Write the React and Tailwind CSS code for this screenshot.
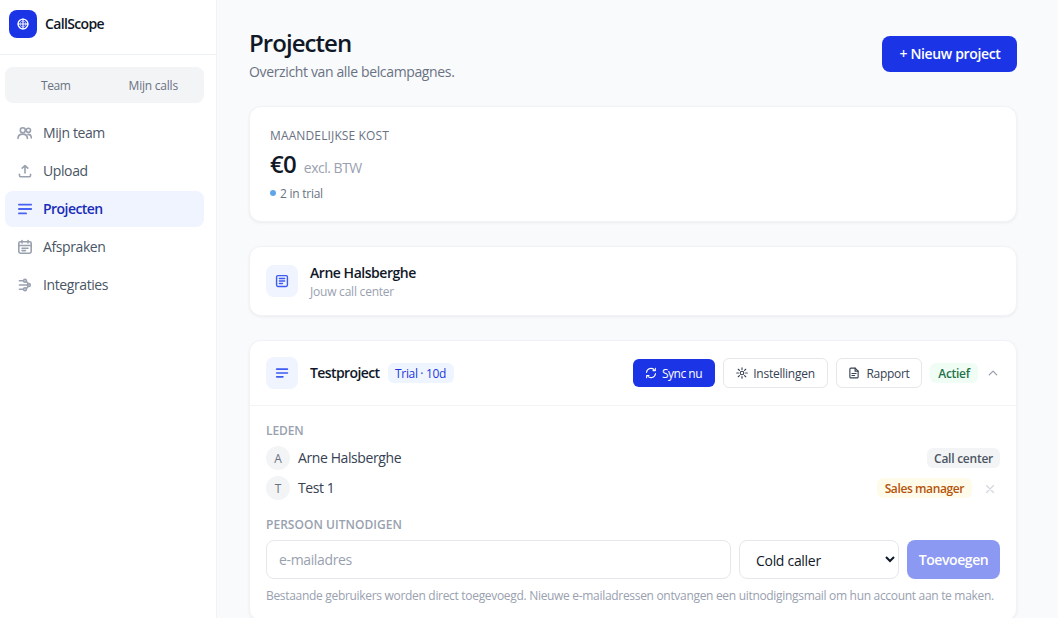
const NAV = [
    { label: 'Mijn team', icon: TeamIcon },
    { label: 'Upload', icon: UploadIcon },
    { label: 'Projecten', icon: LinesIcon, active: true },
    { label: 'Afspraken', icon: CalendarIcon },
    { label: 'Integraties', icon: FlowIcon },
];

const MEMBERS = [
    { name: 'Arne Halsberghe', initial: 'A', role: 'Call center', badge: 'bg-gray-100 px-[7px] text-[#4b5563] tracking-[-0.25px]' },
    { name: 'Test 1', initial: 'T', role: 'Sales manager', badge: 'bg-[#fffbeb] px-2 text-[#b45309] tracking-[-0.4px]', removable: true },
];

function Svg({ size = 16, width = 1.6, className = '', children }) {
    return (
        <svg
            width={size}
            height={size}
            viewBox="0 0 16 16"
            fill="none"
            stroke="currentColor"
            strokeWidth={width}
            strokeLinecap="round"
            strokeLinejoin="round"
            className={`shrink-0 ${className}`}
        >
            {children}
        </svg>
    );
}

function LogoIcon() {
    return (
        <Svg size={14}>
            <circle cx="8" cy="8" r="5.6" />
            <path d="M8 2.2v11.6M2.2 8h11.6" strokeWidth="1.3" />
            <circle cx="8" cy="8" r="3.4" strokeWidth="0.6" />
        </Svg>
    );
}

function TeamIcon() {
    return (
        <Svg>
            <circle cx="5.8" cy="5.3" r="2.5" />
            <path d="M1 13.4c0-2.7 2-4.3 4.7-4.3s4.7 1.6 4.7 4.3" />
            <circle cx="11.4" cy="5.3" r="2.1" />
            <path d="M11 9.4c2 0 3.3 1.3 3.3 3.6" />
        </Svg>
    );
}

function UploadIcon() {
    return (
        <Svg>
            <path d="M8 10V2.5M5.2 5.2L8 2.5l2.8 2.7M2.5 11.2v1.6c0 .6.4 1 1 1h9c.6 0 1-.4 1-1v-1.6" />
        </Svg>
    );
}

function LinesIcon({ size = 16 }) {
    return (
        <Svg size={size} width={1.8}>
            <path d="M1.9 3.6h12.3M1.9 8h12.3M1.9 12.4h7.2" />
        </Svg>
    );
}

function CalendarIcon() {
    return (
        <Svg>
            <rect x="1.8" y="2.7" width="12.4" height="11.5" rx="1.6" />
            <path d="M1.8 6.5h12.4M5 1.5v2.4M11 1.5v2.4M5 9.2h6M5 11.6h3.5" />
        </Svg>
    );
}

function FlowIcon() {
    return (
        <Svg>
            <path d="M2.4 3.8h4M2.4 8h7.6M2.4 12.2h4M9.4 4.4l2 2.3M9.4 11.6l2-2.3" />
            <circle cx="8" cy="3.8" r="1.4" />
            <circle cx="11.9" cy="8" r="1.4" />
            <circle cx="8" cy="12.2" r="1.4" />
        </Svg>
    );
}

function DocBoxIcon() {
    return (
        <Svg size={14} width={1.6}>
            <rect x="1.8" y="1.8" width="12.4" height="12.4" rx="1.5" />
            <path d="M5 5.2h6M5 8h6M5 10.8h3.5" />
        </Svg>
    );
}

function SyncIcon() {
    return (
        <Svg size={12} width={1.4}>
            <path d="M2 7.2A6 6 0 0 1 13 4.6M14 8.8A6 6 0 0 1 3 11.4" />
            <path d="M13.8 1.6v3.2h-3.2M2.2 14.4v-3.2h3.2" />
        </Svg>
    );
}

function GearIcon() {
    return (
        <Svg size={12} width={1.5}>
            <circle cx="8" cy="8" r="2.4" />
            <path d="M8 1v2.2M8 12.8V15M1 8h2.2M12.8 8H15M3 3l1.6 1.6M11.4 11.4L13 13M13 3l-1.6 1.6M4.6 11.4L3 13" />
        </Svg>
    );
}

function ReportIcon() {
    return (
        <Svg size={12} width={1.5}>
            <path d="M9.5 1.5H3.8c-.7 0-1.3.6-1.3 1.3v10.4c0 .7.6 1.3 1.3 1.3h8.4c.7 0 1.3-.6 1.3-1.3V5.5z" />
            <path d="M9.5 1.5v4h4M5.2 8.6h5.6M5.2 11.3h3.6" />
        </Svg>
    );
}

function Sidebar() {
    return (
        <aside className="flex w-[217px] shrink-0 flex-col border-r border-[#f0f2f4] bg-white">
            <div className="flex h-[55px] items-center gap-2 border-b border-[#eef1f5] pb-[7px] pl-[9px]">
                <div className="flex size-7 items-center justify-center rounded-lg bg-[#1a34e6] text-white">
                    <LogoIcon />
                </div>
                <span className="text-sm font-semibold tracking-[-0.66px] text-gray-900">CallScope</span>
            </div>

            <div className="mt-3 mr-3 ml-[5px] flex h-9 items-center rounded-lg bg-gray-100 px-0.5 pt-0.5 text-xs text-gray-500">
                <span className="flex-1 text-center tracking-[-0.4px]">Team</span>
                <span className="flex-1 text-center tracking-[-0.22px]">Mijn calls</span>
            </div>

            <nav className="mt-3 mr-3 ml-[5px] flex flex-col gap-0.5">
                {NAV.map(({ label, icon: Icon, active }) => (
                    <a
                        key={label}
                        href="#"
                        className={`flex h-9 items-center gap-2.5 rounded-lg pl-3 text-sm ${
                            active ? 'bg-[#eff4ff] font-semibold tracking-[-0.55px] text-[#1a2cb8]' : 'tracking-[-0.4px] text-gray-600'
                        }`}
                    >
                        <span className={active ? 'text-[#4a63f0]' : 'text-gray-400'}>
                            <Icon />
                        </span>
                        {label}
                    </a>
                ))}
            </nav>
        </aside>
    );
}

function Card({ className = '', children }) {
    return (
        <section className={`rounded-xl border border-[#f1f3f6] bg-white shadow-[0_1px_3px_rgba(0,0,0,0.06)] ${className}`}>
            {children}
        </section>
    );
}

function IconTile({ children }) {
    return (
        <div className="flex size-8 shrink-0 items-center justify-center rounded-lg bg-[#eff4ff] text-[#3d5af1]">
            {children}
        </div>
    );
}

function MemberRow({ name, initial, role, badge, removable }) {
    return (
        <div className="flex h-6 items-center">
            <span className="flex size-6 items-center justify-center rounded-full bg-gray-100 pt-0.5 text-xs text-gray-500">{initial}</span>
            <span className="ml-2 text-sm tracking-[-0.4px] text-gray-700">{name}</span>
            <span className={`ml-auto flex h-5 items-center rounded-md pt-0.5 text-xs font-semibold ${badge}`}>{role}</span>
            {removable && (
                <button className="ml-2 flex w-5 justify-center pt-0.5 text-gray-300">
                    <Svg size={8} width={2.4}>
                        <path d="M1 1l14 14M15 1L1 15" />
                    </Svg>
                </button>
            )}
        </div>
    );
}

export default function App() {
    return (
        <div className="flex h-screen overflow-hidden bg-[#f9fafc] font-['Open_Sans','Noto_Sans',sans-serif]">
            <Sidebar />

            <main className="flex-1 overflow-hidden pt-[27px] pl-8">
                <div className="w-3xl">
                    {/* Page header */}
                    <div className="mb-6 flex h-[55px] items-start justify-between">
                        <div>
                            <h1 className="text-2xl leading-8 font-semibold tracking-[-0.95px] text-gray-900">Projecten</h1>
                            <p className="mt-[3px] text-sm tracking-[-0.36px] text-gray-500">Overzicht van alle belcampagnes.</p>
                        </div>
                        <button className="mt-[9px] h-9 w-[135px] rounded-lg bg-[#1a34e6] pl-px text-sm font-semibold tracking-[-0.35px] text-white">
                            + Nieuw project
                        </button>
                    </div>

                    <div className="flex flex-col gap-6">
                        {/* Monthly cost */}
                        <Card className="h-[116px] p-5 pt-[21px]">
                            <div className="text-xs tracking-[0.13px] text-gray-500">MAANDELIJKSE KOST</div>
                            <div className="mt-1 flex items-baseline">
                                <span className="text-2xl leading-8 font-semibold tracking-[-0.8px] text-gray-900">€0</span>
                                <span className="ml-2 text-sm tracking-[-0.5px] text-gray-400">excl. BTW</span>
                            </div>
                            <div className="mt-1.5 flex items-center gap-1 text-xs tracking-[-0.25px] text-gray-500">
                                <span className="mb-0.5 size-1.5 rounded-full bg-[#60a5e8]" />
                                2 in trial
                            </div>
                        </Card>

                        {/* Owner */}
                        <Card className="flex h-[70px] items-center gap-3 px-4">
                            <IconTile>
                                <DocBoxIcon />
                            </IconTile>
                            <div className="pt-px">
                                <div className="text-sm font-semibold tracking-[-0.46px] text-gray-900">Arne Halsberghe</div>
                                <div className="mt-px text-xs tracking-[-0.22px] text-gray-400">Jouw call center</div>
                            </div>
                        </Card>

                        {/* Project */}
                        <Card>
                            <div className="flex h-[65px] items-center border-b border-gray-100 px-4">
                                <IconTile>
                                    <LinesIcon size={14} />
                                </IconTile>
                                <span className="ml-3 text-sm font-semibold tracking-[-0.6px] text-gray-900">Testproject</span>
                                <span className="ml-2 flex h-5 w-[66px] items-center justify-center rounded-md bg-[#eff5ff] pt-0.5 text-xs font-medium tracking-[-0.35px] text-[#1d37e0]">
                                    Trial · 10d
                                </span>

                                <div className="ml-auto flex items-center gap-2 text-xs">
                                    <button className="flex h-7 w-[82px] items-center justify-center gap-[5px] rounded-md bg-[#1a34e6] pr-px font-medium tracking-[-0.5px] text-white">
                                        <SyncIcon />
                                        <span className="pt-0.5">Sync nu</span>
                                    </button>
                                    <button className="flex h-[30px] w-[105px] items-center justify-center gap-[5px] rounded-md border border-gray-200 tracking-[-0.25px] text-gray-700">
                                        <GearIcon />
                                        <span className="pt-0.5">Instellingen</span>
                                    </button>
                                    <button className="flex h-[30px] w-[86px] items-center justify-center gap-1.5 rounded-md border border-gray-200 tracking-[-0.3px] text-gray-700">
                                        <ReportIcon />
                                        <span className="pt-0.5">Rapport</span>
                                    </button>
                                    <span className="flex h-5 w-12 items-center justify-center rounded-md bg-[#effdf4] pt-0.5 font-semibold tracking-[-0.3px] text-[#24724a]">
                                        Actief
                                    </span>
                                    <span className="flex w-[14px] justify-center text-gray-400">
                                        <Svg size={12} width={1.8}>
                                            <path d="M3 10.5l5-5 5 5" />
                                        </Svg>
                                    </span>
                                </div>
                            </div>

                            <div className="px-4 pt-[17px] pb-4">
                                <div className="text-xs font-semibold tracking-[-0.1px] text-gray-400">LEDEN</div>
                                <div className="mt-[7px] flex flex-col gap-1.5">
                                    {MEMBERS.map((member) => (
                                        <MemberRow key={member.name} {...member} />
                                    ))}
                                </div>

                                <div className="mt-[17px] text-xs font-semibold tracking-[0.04px] text-gray-400">PERSOON UITNODIGEN</div>
                                <div className="mt-[7px] flex h-[39px] gap-2">
                                    <input
                                        type="email"
                                        placeholder="e-mailadres"
                                        className="min-w-0 flex-1 rounded-lg border border-gray-200 px-3 pt-px text-sm tracking-[-0.36px] placeholder:text-gray-400"
                                    />
                                    <select className="w-40 rounded-lg border border-gray-200 bg-white px-3 pt-px text-sm tracking-[-0.3px] text-gray-900">
                                        <option>Cold caller</option>
                                    </select>
                                    <button className="w-[93px] rounded-lg bg-[#8c99f2] pt-px text-sm font-semibold tracking-[-0.4px] text-white">
                                        Toevoegen
                                    </button>
                                </div>
                                <p className="mt-[9px] text-xs tracking-[-0.31px] whitespace-nowrap text-gray-400">
                                    Bestaande gebruikers worden direct toegevoegd. Nieuwe e-mailadressen ontvangen een uitnodigingsmail om hun account aan te maken.
                                </p>
                            </div>
                        </Card>
                    </div>
                </div>
            </main>
        </div>
    );
}
